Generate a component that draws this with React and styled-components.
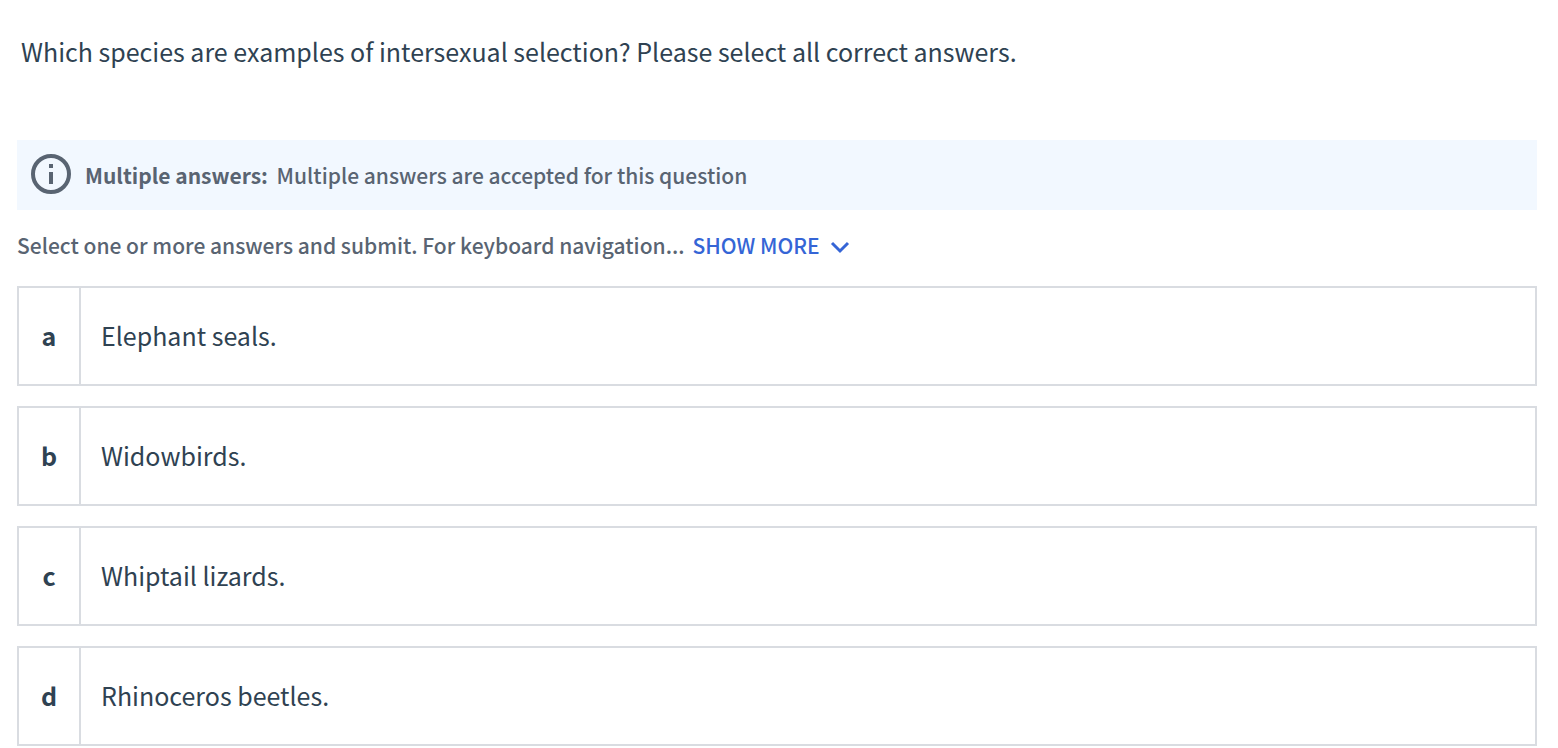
import React, { useState } from "react";
import styled, { createGlobalStyle } from "styled-components";

const GlobalStyle = createGlobalStyle`
  *, *::before, *::after { box-sizing: border-box; }
  body {
    margin: 0;
    background: #fff;
    color: #2f4252;
    font-family: "Noto Sans CJK SC", "Noto Sans", sans-serif;
  }
`;

const Page = styled.main`
  padding: 32px 21px 2px 17px;
`;

const Question = styled.h1`
  margin: 0 0 70px;
  padding: 0 4px;
  font-size: 25px;
  font-weight: 400;
  line-height: 38px;
`;

const Banner = styled.div`
  display: flex;
  align-items: flex-start;
  gap: 14px;
  padding: 14px;
  background: #f2f8ff;
  color: #596472;
`;

const InfoIcon = styled.svg`
  flex: none;
  width: 40px;
  height: 40px;
`;

const BannerText = styled.p`
  margin: 0;
  font-size: 21px;
  font-weight: 500;
  line-height: 42px;
`;

const BannerLabel = styled.strong`
  margin-right: 4px;
  font-weight: 700;
`;

const Instructions = styled.div`
  display: flex;
  align-items: center;
  gap: 8px;
  padding: 20px 0 26px;
  color: #596472;
  font-size: 21px;
  font-weight: 500;
  line-height: 30px;
`;

const ShowMore = styled.button`
  display: flex;
  align-items: center;
  gap: 10px;
  padding: 0;
  border: 0;
  background: none;
  color: #3565d6;
  font: inherit;
  cursor: pointer;
`;

const Chevron = styled.svg`
  width: 20px;
  height: 20px;
`;

const AnswerList = styled.ul`
  display: flex;
  flex-direction: column;
  gap: 20px;
  margin: 0;
  padding: 0;
  list-style: none;
`;

const Answer = styled.button`
  display: flex;
  align-items: stretch;
  width: 100%;
  min-height: 100px;
  padding: 0;
  border: 2px solid #d9dce1;
  background: ${({ $selected }) => ($selected ? "#f2f8ff" : "#fff")};
  color: inherit;
  font-family: inherit;
  font-size: 25px;
  line-height: 38px;
  text-align: left;
  cursor: pointer;
`;

const AnswerKey = styled.span`
  display: flex;
  flex: none;
  align-items: center;
  justify-content: center;
  width: 62px;
  padding-bottom: 2px;
  border-right: 2px solid #d9dce1;
  font-weight: 700;
`;

const AnswerText = styled.span`
  align-self: center;
  padding: 0 20px 2px;
`;

const answers = [
  { key: "a", text: "Elephant seals." },
  { key: "b", text: "Widowbirds." },
  { key: "c", text: "Whiptail lizards." },
  { key: "d", text: "Rhinoceros beetles." },
];

export default function App() {
  const [selected, setSelected] = useState([]);

  const toggle = (key) =>
    setSelected((keys) =>
      keys.includes(key) ? keys.filter((k) => k !== key) : [...keys, key]
    );

  return (
    <>
      <GlobalStyle />
      <Page>
        <Question>
          Which species are examples of intersexual selection? Please select all
          correct answers.
        </Question>
        <Banner>
          <InfoIcon viewBox="0 0 40 40" aria-hidden="true">
            <circle cx="20" cy="20" r="18" fill="none" stroke="currentColor" strokeWidth="4" />
            <path d="M18 10h4v4h-4zM18 18h4v12h-4z" fill="currentColor" />
          </InfoIcon>
          <BannerText>
            <BannerLabel>Multiple answers:</BannerLabel>
            {" "}Multiple answers are accepted for this question
          </BannerText>
        </Banner>
        <Instructions>
          <span>Select one or more answers and submit. For keyboard navigation...</span>
          <ShowMore type="button">
            SHOW MORE
            <Chevron viewBox="0 0 20 20" aria-hidden="true">
              <path d="M2 8l8 8 8-8" fill="none" stroke="currentColor" strokeWidth="3" />
            </Chevron>
          </ShowMore>
        </Instructions>
        <AnswerList>
          {answers.map(({ key, text }) => (
            <li key={key}>
              <Answer
                type="button"
                aria-pressed={selected.includes(key)}
                $selected={selected.includes(key)}
                onClick={() => toggle(key)}
              >
                <AnswerKey>{key}</AnswerKey>
                <AnswerText>{text}</AnswerText>
              </Answer>
            </li>
          ))}
        </AnswerList>
      </Page>
    </>
  );
}
